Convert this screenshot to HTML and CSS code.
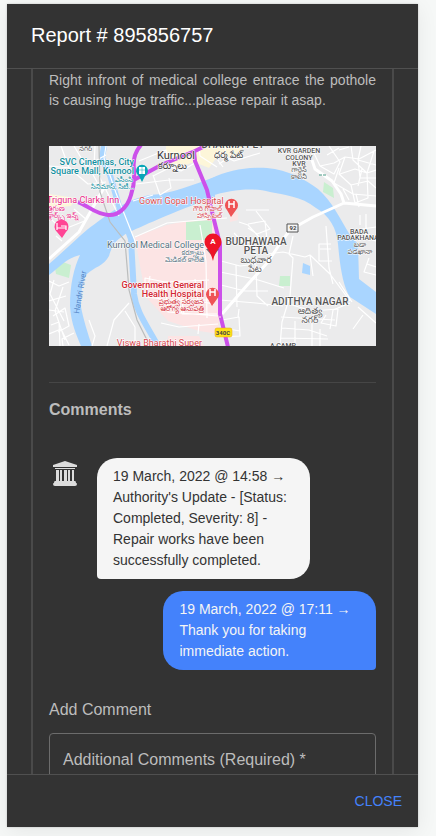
FILE: index.html
```html
<!DOCTYPE html>
<html lang="en">
<head>
<meta charset="utf-8">
<meta name="viewport" content="width=device-width, initial-scale=1">
<title>Report # 895856757</title>
<link rel="stylesheet" href="styles.css">
</head>
<body>
<section class="dialog" role="dialog" aria-labelledby="dialog-title">
  <header class="dialog-header">
    <h1 class="dialog-title" id="dialog-title">Report # 895856757</h1>
  </header>
  <main class="dialog-content">
    <article class="report">
      <p class="description">Right infront of medical college entrace the pothole is causing huge traffic...please repair it asap.</p>
      <svg class="map" viewBox="0 0 327 200" preserveAspectRatio="xMidYMid slice" role="img" aria-label="Map of Kurnool">
        <rect width="327" height="200" fill="#ebebec"/>
        <path fill="#fdf6d9" d="M117 0H195L183 12 170 8 160 22 145 16 128 22 117 12ZM0 48L26 52 22 60 0 62Z"/>
        <path fill="#fce4e4" d="M86 91L118 79 137 75 163 74 170 92V188L150 185 119 175 97 151 91 120ZM181 68l8-2v8l-8 2zM119 190L150 190 155 200H119Z"/>
        <path fill="#c9efd0" d="M137 76L163 74V94H137ZM6 122L14 116 22 119 20 132 7 128ZM275 36L284 42 285 52 274 46ZM231 130h10v10h-11z"/>
        <g fill="#a9d5ff">
          <path d="M166 31C145 38 123 48 101 49C75 53 55 72 39 83C26 94 15 105 0 118V129C10 122 17 112 31 109C25 122 21 138 21 160C22 178 28 190 32 200H43C39 188 34 172 32 161C32 145 33 135 38 128C45 121 55 120 60 110C65 95 66 96 78 87C90 82 123 66 166 51Z"/>
          <path d="M161 33C180 24 197 21 218 22C240 24 255 33 269 43C284 56 292 75 301 89L309 98 310 133 327 146V168L301 151C294 140 291 121 289 98C288 83 280 69 267 62C252 50 235 49 221 46C202 41 183 44 161 50Z"/>
          <path d="M254 117L261 120 261 129 253 127Z"/>
        </g>
        <path fill="none" stroke="#a9d5ff" stroke-width="6" d="M55 0L53 12 61 29 70 60 82 93 85 148C87 165 97 178 109 200"/>
        <g fill="none" stroke="#fff" stroke-width="1.2" stroke-linejoin="round">
          <path d="M12 0L20 22 39 38 57 36M25 0L37 20 57 9M0 20L22 22M57 0L55 12 67 47 88 100M46 0L45 20 70 70M41 23L48 36M0 71L13 84 38 74M7 90L13 95M25 63L38 74"/>
          <path d="M90 15L117 4 120 20 132 25 146 17M104 29L111 49 122 42 120 32M87 38L120 34 145 34M104 30L128 18M84 55L104 49M150 0L151 10 168 21M177 0L175 10 185 15 211 7M168 13L174 21M170 18L176 14M86 91L118 77 163 73 178 72"/>
          <path d="M0 135L10 140 20 136M0 155L17 150M4 170L16 162 20 180 9 186M0 188L12 183 20 199M5 134L1 148 15 175M14 141L6 165 16 194M0 164L15 166M25 187L13 193 14 200M2 179L10 176 11 200M40 174L46 190 43 200"/>
          <path d="M80 157L65 174 58 200M76 165L86 181 86 200M96 137V132L116 136 160 134M101 130L97 151 122 154 167 154M116 136L119 166 169 170M127 139L133 168 168 168M112 177L130 181 169 178M146 133L149 155 165 158M151 79L157 115 158 172M150 178L149 188M133 155L135 168"/>
          <path d="M197 64H220M207 65L221 83 208 88 199 82M199 78L216 75 218 94 196 97M190 76L199 79 210 91M185 87L198 100 222 92M172 115L191 120 207 118M171 126L206 133 235 142M172 139L196 145 219 145M171 154L207 157 234 160M187 119L188 161M207 119L208 150 219 160M173 174L190 171 191 190 171 191M173 182L191 185M190 163L189 171"/>
          <path d="M244 90L240 108 244 112 241 150 233 176 231 200M218 108L234 106 256 111 261 109 281 128 301 155M261 109L264 130M277 80L280 122 284 138M282 98H270V115H283M271 103h11M240 158L263 165 289 163 287 180 272 177 277 169M232 171L286 174M233 182L260 184 278 190M232 192L279 193M246 175V200M263 173V200M271 183V200M290 136L303 156"/>
          <path d="M264 5L271 20 285 17 296 11 310 13 327 4M280 0L291 16 285 28 271 20M296 11L290 28 302 39 319 35 327 42M302 0L304 14 318 27 327 24M312 0L309 14 327 19M291 28L306 23 318 27 319 52 306 57 302 39M290 22L285 37 304 48 327 50M309 14L311 32 327 32M307 48L310 61M300 1L290 4M278 9L290 2M313 23L309 40M325 5L318 27M294 43L300 54"/>
          <path d="M311 69V79M317 68V92L327 95M306 84V95M313 83L327 81M320 112L315 126 327 129M318 118L327 121M309 161L327 177M301 157L284 164 281 183M314 169L304 183"/>
        </g>
        <g fill="none" stroke="#fff" stroke-width="3" stroke-linejoin="round">
          <path d="M56 40L30 86 0 113M263 14L266 23 283 35 292 48 295 57M248 80L264 71 295 57 327 60M173 168L200 137 219 116 230 99 241 84"/>
        </g>
        <path fill="none" stroke="#bbbdbd" stroke-width="1.2" d="M50 0L51 46 61 76 76 95 80 144 88 174 101 200"/>
        <g fill="none" stroke="#cc50ea" stroke-width="4" stroke-linejoin="round">
          <path d="M92 -1Q83 9 85 24Q86 37 82 49C78 63 68 70 59 69C46 68 38 59 29 56M83 35L112 19 146 5 156 0M145 5L146 15 158 44 165 74 171 98 171 168 179 201"/>
        </g>
        <circle cx="171" cy="171" r="1" fill="#e9b6f5"/>
        <g class="map-label">
          <g class="cinema" text-anchor="end"><text x="85" y="19">SVC Cinemas, City</text><text x="85" y="28">Square Mall, Kurnool</text><text class="telugu" x="84" y="36">ఎసీంసి</text><text class="telugu" x="85" y="43">సినిమాస్, సిటీ...</text></g>
          <text class="telugu" x="30" y="5" fill="#555">నగర్</text>
          <g class="city"><text x="108" y="13">Kurnool</text><text class="telugu-city" x="109" y="23">కర్నూలు</text></g>
          <text class="area" x="184" y="2" text-anchor="middle">DHARMA PET</text>
          <text class="telugu-city dark" x="165" y="12">ధర్మ పేట్</text>
          <g class="hotel"><text x="-2" y="57">Triguna Clarks Inn</text><text class="telugu" x="-2" y="65">త్రిగుణ</text><text class="telugu" x="-1" y="72">క్లార్క్స్ ఇన్న్</text></g>
          <g class="hospital"><text x="90" y="58">Gowri Gopal Hospital</text><g text-anchor="end"><text class="telugu" x="173" y="65">గౌరి గోపాల్</text><text class="telugu" x="173" y="72">హాస్పిటల్</text></g></g>
          <g class="college" text-anchor="end"><text x="155" y="102">Kurnool Medical College</text><text class="telugu" x="155" y="109">కర్నూలు</text><text class="telugu" x="155" y="116">మెడికల్ కాలేజీ</text></g>
          <g class="hospital strong" text-anchor="end"><text x="155" y="142">Government General</text><text x="155" y="151">Health Hospital</text><text class="telugu" x="155" y="158">ప్రభుత్వ సర్వజన</text><text class="telugu" x="155" y="165">ఆరోగ్య ఆసుపత్రి</text></g>
          <text class="hospital" x="153" y="200" text-anchor="end">Viswa Bharathi Super</text>
          <g class="area small" text-anchor="middle"><text x="250" y="7">KVR GARDEN</text><text x="250" y="14">COLONY</text><text x="250" y="20">KVR</text><text class="telugu" x="250" y="26">గార్డెన్</text><text class="telugu" x="250" y="33">కాలనీ</text><text x="310" y="88">BADA</text><text x="309" y="94">PADAKHANA</text><text class="telugu" x="311" y="101">బడా</text><text class="telugu" x="311" y="108">పడఖానా</text><text x="234" y="202">A CAMP</text></g>
          <g class="area" text-anchor="middle"><text x="207" y="99">BUDHAWARA</text><text x="207" y="108">PETA</text><text class="telugu-city" x="207" y="117">బుధవార</text><text class="telugu-city" x="206" y="126">పేట</text><text x="261" y="159">ADITHYA NAGAR</text><text class="telugu-city" x="261" y="168">ఆదిత్య</text><text class="telugu-city" x="261" y="177">నగర్</text></g>
          <text class="river" transform="translate(30 168) rotate(-80)">Handri River</text>
        </g>
        <path fill="#08a6b7" d="M93 36L90 30A6 6 0 1 1 96 30Z"/><path fill="#fff" d="M90 21h6v7h-6z"/><path stroke="#08a6b7" d="M93 21v7M90 24h6" stroke-width=".5"/>
        <path fill="#ff4494" d="M13 92L8 86A7 7 0 1 1 17 86Z"/><path fill="none" stroke="#fff" stroke-width="1.2" d="M8 77v7M8 82h9v-2h-5M17 80v4"/>
        <path fill="#ef5355" d="M182 71L178 64A6.500 6.500 0 1 1 187 64ZM163 160L159 153A6.500 6.500 0 1 1 168 153Z"/>
        <g fill="none" stroke="#fff" stroke-width="1.5"><path d="M180 55v7M185 55v7M180 58h5M161 143v7M166 143v7M161 146h5"/></g>
        <path fill="#697077" d="M164 111L157 103H170Z"/>
        <path fill="#ee1427" d="M164 115Q162 107 158 102A8.500 8.500 0 1 1 170 102Q165 108 164 115Z"/>
        <text class="pin" x="164" y="98" text-anchor="middle">A</text>
        <path fill="#f5f5f5" stroke="#555" d="M238 78h11v8h-11z"/><text class="route" x="244" y="84" text-anchor="middle">92</text>
        <rect x="166" y="182" width="17" height="9" rx="2" fill="#ffe018" stroke="#dca916" stroke-width=".5"/><text class="route" x="174" y="189" text-anchor="middle">340C</text>
        <path stroke="#4a9b86" stroke-dasharray="3 1" d="M270 29h7"/>
      </svg>
      <hr class="divider">
      <h2 class="comments-title">Comments</h2>
      <div class="comment">
        <svg class="authority" viewBox="0 0 26 28" aria-hidden="true"><g fill="#dcdcdc"><path d="M13 1L25 5V7H1V5ZM3 8H23V9H3ZM4 10h3v11H4zM8 10h2v11H8zM12 10h3v11h-3zM16 10h2v11h-2zM20 10h2v11h-2z"/><path d="M3 21H23Q24 21 24 23Q25 23 25 24Q25 26 23 26H3Q1 26 1 24Q1 23 2 23Q2 21 3 21Z"/></g></svg>
        <p class="bubble bubble-authority">19 March, 2022 @ 14:58 → Authority's Update - [Status: Completed, Severity: 8] - Repair works have been successfully completed.</p>
      </div>
      <div class="comment comment-own">
        <p class="bubble bubble-own">19 March, 2022 @ 17:11 → Thank you for taking immediate action.</p>
      </div>
      <form class="comment-form">
        <label class="field-label" for="comment">Add Comment</label>
        <textarea class="field" id="comment" rows="4" placeholder="Additional Comments (Required) *" required></textarea>
      </form>
    </article>
  </main>
  <footer class="dialog-actions">
    <button class="close" type="button">CLOSE</button>
  </footer>
</section>
</body>
</html>
```
FILE: styles.css
```css
* { box-sizing: border-box; }

body {
  margin: 0;
  height: 100vh;
  padding: 4px 18px 9px 7px;
  display: flex;
  background: #f6f8f7;
  font-family: "Liberation Sans", Arial, sans-serif;
  color: #bdbdbd;
}

.dialog {
  flex: 1;
  min-width: 0;
  display: flex;
  flex-direction: column;
  background: #333;
  box-shadow: 0 0 2px #0003, 0 4px 20px #00000012;
}

.dialog-header { padding: 15px 24px 17px; }

.dialog-title {
  margin: 0;
  font-size: 20px;
  line-height: 32px;
  font-weight: 400;
  color: #fff;
}

.dialog-content {
  flex: 1;
  min-height: 0;
  padding: 0 24px;
  overflow: auto;
  scrollbar-width: none;
  border-top: 1px solid #505050;
  border-bottom: 1px solid #505050;
}

.report {
  padding: 1px 16px 16px;
  border: solid #4a4a4a;
  border-width: 0 2px;
}

.description {
  margin: 0 0 36px;
  font-size: 14px;
  line-height: 20px;
  text-align: justify;
}

.map {
  display: block;
  width: 100%;
  height: 200px;
}

.divider {
  margin: 36px 0 15px;
  border: 0;
  border-top: 1px solid #464646;
}

.comments-title {
  margin: 0 0 36px;
  font-size: 16px;
  line-height: 24px;
}

.comment {
  display: flex;
  align-items: flex-start;
  gap: 16px;
  margin-bottom: 12px;
}

.comment-own { justify-content: flex-end; }

.authority {
  width: 32px;
  height: 32px;
  padding: 2px;
}

.bubble {
  width: 65%;
  margin: 0;
  padding: 8px 16px;
  font-size: 14px;
  line-height: 21px;
}

.bubble-authority {
  border-radius: 20px 20px 20px 4px;
  background: #f5f5f5;
  color: #333;
}

.bubble-own {
  border-radius: 20px 20px 4px 20px;
  background: #4482fb;
  color: #f5f5f5;
}

.comment-form { margin-top: 28px; }

.field-label {
  display: block;
  margin-bottom: 11px;
  font-size: 16px;
  line-height: 24px;
}

.field {
  display: block;
  width: 100%;
  padding: 16px 13px;
  border: 1px solid #6c6c6c;
  border-radius: 4px;
  background: transparent;
  color: #fff;
  font: 16px/20px "Liberation Sans", Arial, sans-serif;
  resize: none;
}

.field::placeholder { color: #bdbdbd; opacity: 1; }

.dialog-actions {
  display: flex;
  justify-content: flex-end;
  padding: 8px;
}

.close {
  padding: 6px 8px;
  border: 0;
  background: none;
  color: #4482fb;
  font: 14px/24px "Liberation Sans", Arial, sans-serif;
}

.map-label {
  font-family: Roboto, "Noto Sans Telugu", sans-serif;
  font-size: 9px;
  font-weight: 400;
  paint-order: stroke;
  stroke: #fff;
  stroke-width: 1px;
}

.cinema { fill: #12909f; font-weight: 500; }
.city { font-size: 11px; fill: #333; }
.hotel { fill: #e91e83; }
.hospital { fill: #d84850; }
.strong { fill: #d32631; font-weight: 500; }
.college { fill: #566f7d; }
.area { fill: #555; font-size: 10px; font-weight: 500; }
.small { font-size: 7px; }
.dark { fill: #444; }
.telugu { font-size: 7px; font-weight: 400; }
.telugu-city { font-size: 9px; font-weight: 400; }
.river { fill: #5687c8; stroke: none; font-size: 8px; }
.pin { fill: #fff; font: bold 8px Roboto, sans-serif; }
.route { fill: #444; font: bold 6px Roboto, sans-serif; }
```
